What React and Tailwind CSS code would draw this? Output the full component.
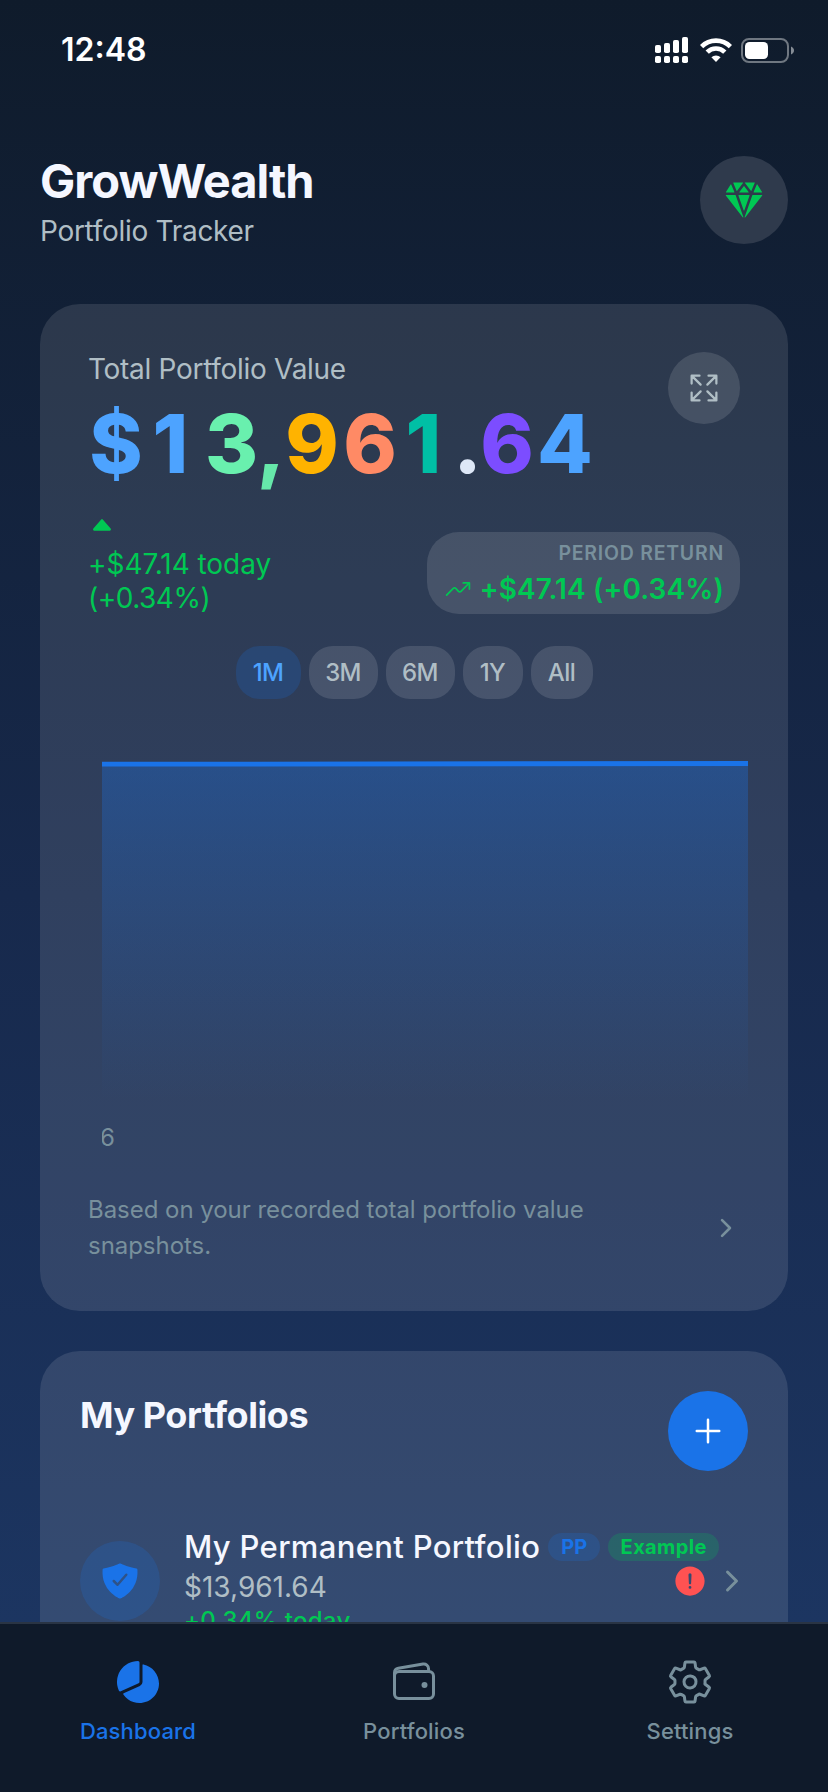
import {
  IoAdd,
  IoAlertCircle,
  IoCaretUp,
  IoChevronForward,
  IoDiamond,
  IoExpandOutline,
  IoPieChart,
  IoSettingsOutline,
  IoShieldCheckmark,
  IoTrendingUp,
  IoWalletOutline,
} from "react-icons/io5";

const amount = [
  { char: "$", style: "w-[58px] pr-[2px] text-[#4da3ff]" },
  { char: "1", style: "w-[58px] pr-[9px] text-[#4da3ff]" },
  { char: "3", style: "w-[58px] pr-[3px] text-[#69f0ae]" },
  { char: ",", style: "w-[21px] pr-[3px] text-[#66e8aa]" },
  { char: "9", style: "w-[58px] text-[#ffb300]" },
  { char: "6", style: "w-[58px] text-[#ff8a65]" },
  { char: "1", style: "w-[58px] pr-[9px] text-[#00bfa5]" },
  { char: ".", style: "w-[21px] text-[#dde7f7]" },
  { char: "6", style: "w-[58px] text-[#7c4dff]" },
  { char: "4", style: "w-[58px] text-[#4da3ff]" },
];

const periods = [
  { label: "1M", width: "w-[65px]" },
  { label: "3M", width: "w-[69px]" },
  { label: "6M", width: "w-[69px]" },
  { label: "1Y", width: "w-[60px]" },
  { label: "All", width: "w-[62px]" },
];

function StatusBar() {
  return (
    <div className="flex h-[100px] shrink-0 items-center justify-between pl-[61px] pr-[33px] text-white">
      <span className="text-[32px] font-semibold leading-none">12:48</span>
      <div className="flex items-center">
        <svg width="34" height="26" viewBox="0 0 34 26" fill="currentColor">
          <rect x="0" y="8" width="6" height="8" rx="1.8" />
          <rect x="9" y="6" width="6" height="10" rx="1.8" />
          <rect x="18" y="3" width="6" height="13" rx="1.8" />
          <rect x="27" y="0" width="6" height="16" rx="1.8" />
          <rect x="0" y="19" width="6" height="7" rx="1.8" />
          <rect x="9" y="19" width="6" height="7" rx="1.8" />
          <rect x="18" y="19" width="6" height="7" rx="1.8" />
          <rect x="27" y="19" width="6" height="7" rx="1.8" />
        </svg>
        <svg className="ml-[11px]" width="32" height="24" viewBox="0 0 32 24">
          <g fill="none" stroke="currentColor" strokeWidth="4.6">
            <path d="M1.6 8.6a20.4 20.4 0 0 1 28.8 0" />
            <path d="M7.2 14.2a12.4 12.4 0 0 1 17.6 0" />
          </g>
          <path d="M16 24l-4.6-4.7a6.6 6.6 0 0 1 9.2 0z" fill="currentColor" />
        </svg>
        <svg className="ml-[9px]" width="54" height="25" viewBox="0 0 54 25">
          <rect x="1" y="1" width="46" height="23" rx="7" fill="none" stroke="#6f7781" strokeWidth="2" />
          <rect x="4" y="4" width="23" height="17" rx="4.5" fill="#fff" />
          <path d="M50 8.5c2 .8 3 2.3 3 4s-1 3.2-3 4z" fill="#858c95" />
        </svg>
      </div>
    </div>
  );
}

function Header() {
  return (
    <header className="mt-14 flex h-[88px] shrink-0 justify-between px-10">
      <div>
        <h1 className="-mt-px text-[47px] font-bold leading-[52px] tracking-[-1px] text-[#f5f7ff]">
          GrowWealth
        </h1>
        <p className="mt-[7px] text-[28px] leading-[34px] tracking-[-0.3px] text-[#b0bec5]">
          Portfolio Tracker
        </p>
      </div>
      <div className="flex size-[88px] items-center justify-center rounded-full bg-[#2f3a4c]">
        <IoDiamond className="size-10 text-[#00c853]" />
      </div>
    </header>
  );
}

function Chart() {
  return (
    <svg className="ml-[14px] mt-14 block" width="646" height="400" viewBox="0 0 646 400">
      <defs>
        <linearGradient id="area" x1="0" y1="0" x2="0" y2="1">
          <stop offset="0" stopColor="#1a73e8" stopOpacity="0.33" />
          <stop offset="1" stopColor="#1a73e8" stopOpacity="0" />
        </linearGradient>
      </defs>
      <path d="M0 9L646 8V345H0z" fill="url(#area)" />
      <path d="M0 9.2L646 8.5" stroke="#1a73e8" strokeWidth="4.8" />
      <text x="-2" y="391" fontSize="24" fill="#78909c">6</text>
    </svg>
  );
}

function ValueCard() {
  return (
    <section className="mx-10 mt-[60px] h-[1007px] shrink-0 rounded-[40px] bg-white/11 pl-12 pt-12">
      <div className="flex h-[132px] justify-between pr-12">
        <div>
          <p className="text-[28px] leading-[34px] tracking-[-0.3px] text-[#b0bec5]">
            Total Portfolio Value
          </p>
          <div className="mt-[10px] flex text-[81px] font-extrabold leading-[96px]">
            {amount.map((item, i) => (
              <span key={i} className={`flex justify-center ${item.style}`}>
                {item.char}
              </span>
            ))}
          </div>
        </div>
        <div className="flex size-[72px] items-center justify-center rounded-full bg-white/12">
          <IoExpandOutline className="size-9 text-[#b0bec5]" />
        </div>
      </div>

      <div className="mt-[27px] flex justify-between pr-12 text-[#00c853]">
        <div className="text-[28px] leading-[34px]">
          <IoCaretUp className="mb-2 size-7" />
          <p className="tracking-[-0.05px]">+$47.14 today</p>
          <p className="tracking-[-0.5px]">(+0.34%)</p>
        </div>
        <div className="mt-[21px] flex h-[82px] w-[313px] flex-col items-end rounded-[32px] bg-white/12 px-4 pt-2">
          <span className="text-[19.5px] font-semibold leading-[26px] tracking-[0.75px] text-[#78909c]">
            PERIOD RETURN
          </span>
          <span className="mt-[6px] flex items-center gap-2 whitespace-nowrap text-[28px] font-semibold leading-[34px] tracking-[0.1px]">
            <IoTrendingUp className="size-7" />
            +$47.14 (+0.34%)
          </span>
        </div>
      </div>

      <div className="mt-[31px] flex justify-center gap-2 pr-12 text-2xl font-medium leading-[53px] tracking-[-0.6px]">
        {periods.map((period) => (
          <button
            key={period.label}
            className={`h-[53px] rounded-3xl ${period.width} ${
              period.label === "1M"
                ? "bg-[#1a73e8]/20 text-[#4da3ff]"
                : "bg-white/12 text-[#b0bec5]"
            }`}
          >
            {period.label}
          </button>
        ))}
      </div>

      <Chart />

      <div className="mt-[37px] flex items-center justify-between pr-12 text-[#78909c]">
        <p className="w-[520px] text-2xl leading-9 tracking-[-0.04px]">
          Based on your recorded total portfolio value snapshots.
        </p>
        <IoChevronForward className="size-7" />
      </div>
    </section>
  );
}

function PortfoliosCard() {
  return (
    <section className="mx-10 mt-10 h-[500px] shrink-0 rounded-[40px] bg-white/11 p-10">
      <div className="flex justify-between">
        <h2 className="mt-0.5 text-4xl font-bold leading-[44px] tracking-[-0.45px] text-[#f5f7ff]">
          My Portfolios
        </h2>
        <button className="flex size-20 items-center justify-center rounded-full bg-[#1a73e8] text-white">
          <IoAdd className="size-10" />
        </button>
      </div>
      <div className="mt-14 flex items-start">
        <div className="mt-[14px] flex size-20 items-center justify-center rounded-full bg-[#1a73e8]/20">
          <IoShieldCheckmark className="size-10 text-[#1a73e8]" />
        </div>
        <div className="ml-6 flex-1">
          <div className="flex items-center gap-2">
            <span className="whitespace-nowrap text-[31px] font-medium leading-10 tracking-[0.33px] text-[#f5f7ff]">
              My Permanent Portfolio
            </span>
            <span className="flex h-7 w-[52px] items-center justify-center rounded-[14px] bg-[#1a73e8]/20 text-xl font-bold text-[#1a73e8]">
              PP
            </span>
            <span className="flex h-7 w-[111px] items-center justify-center rounded-[14px] bg-[#00c853]/20 text-xl font-bold tracking-[0.4px] text-[#00c853]">
              Example
            </span>
          </div>
          <div className="flex items-start justify-between">
            <div>
              <p className="text-[28px] leading-10 text-[#b0bec5]">$13,961.64</p>
              <p className="-mt-0.5 text-2xl font-medium leading-8 tracking-[0.3px] text-[#00c853]">
                +0.34% today
              </p>
            </div>
            <div className="-mt-1 flex items-center gap-2">
              <IoAlertCircle className="size-9 text-[#ff5252]" />
              <IoChevronForward className="size-8 text-[#78909c]" />
            </div>
          </div>
        </div>
      </div>
    </section>
  );
}

function TabBar() {
  const tabs = [
    { label: "Dashboard", Icon: IoPieChart, color: "text-[#1a73e8]" },
    { label: "Portfolios", Icon: IoWalletOutline, color: "text-[#78909c]" },
    { label: "Settings", Icon: IoSettingsOutline, color: "text-[#78909c]" },
  ];
  return (
    <nav className="grid h-[170px] shrink-0 grid-cols-3 border-t-2 border-[#293444] bg-[#0f1a2a]">
      {tabs.map(({ label, Icon, color }) => (
        <div key={label} className={`flex flex-col items-center pt-[34px] ${color}`}>
          <Icon className="size-12" />
          <span className="mt-[11px] text-[22px] font-medium leading-7 tracking-[0.15px]">
            {label}
          </span>
        </div>
      ))}
    </nav>
  );
}

export default function App() {
  return (
    <div className="flex h-[1792px] w-[828px] flex-col overflow-hidden bg-linear-to-b from-[#0f1b2b] via-[#17294c] to-[#1d3866] font-[Inter,sans-serif]">
      <main className="flex h-[1622px] shrink-0 flex-col overflow-hidden">
        <StatusBar />
        <Header />
        <ValueCard />
        <PortfoliosCard />
      </main>
      <TabBar />
    </div>
  );
}
